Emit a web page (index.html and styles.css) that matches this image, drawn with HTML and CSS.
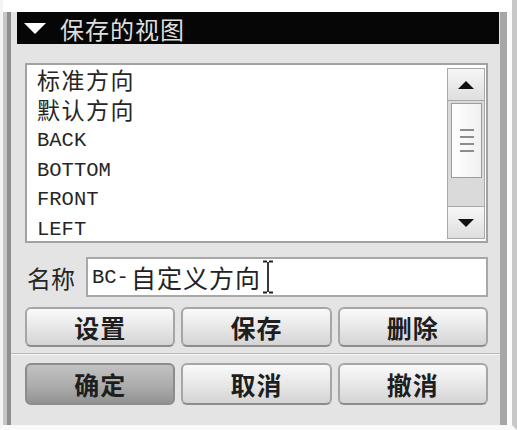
FILE: index.html
```html
<!DOCTYPE html>
<html lang="zh-CN">
<head>
    <meta charset="UTF-8">
    <title>保存的视图</title>
    <link rel="stylesheet" href="styles.css">
</head>
<body>
    <div class="shell">
        <div class="frame">
            <div class="panel">
                <div class="header">
                    <svg class="toggle" width="22" height="11" viewBox="0 0 22 11"><polygon points="0,0 22,0 11,11" fill="#fff"/></svg>
                    <span>保存的视图</span>
                </div>

                <div class="content">
                    <div class="listbox">
                        <div class="items">
                            <div class="item">标准方向</div>
                            <div class="item">默认方向</div>
                            <div class="item en">BACK</div>
                            <div class="item en">BOTTOM</div>
                            <div class="item en">FRONT</div>
                            <div class="item en">LEFT</div>
                        </div>
                        <div class="scrollbar">
                            <div class="sb-btn up">
                                <svg width="16" height="8" viewBox="0 0 16 8"><polygon points="8,0 16,8 0,8" fill="#111"/></svg>
                            </div>
                            <div class="thumb">
                                <span class="grip"></span>
                                <span class="grip"></span>
                                <span class="grip"></span>
                                <span class="grip"></span>
                            </div>
                            <div class="track"></div>
                            <div class="sb-btn down">
                                <svg width="16" height="8" viewBox="0 0 16 8"><polygon points="0,0 16,0 8,8" fill="#111"/></svg>
                            </div>
                        </div>
                    </div>

                    <div class="name-row">
                        <label>名称</label>
                        <div class="textbox">
                            <span class="en">BC-</span><span class="cjk">自定义方向</span>
                            <svg class="ibeam" width="12" height="34" viewBox="0 0 12 34"><path d="M1 1.5H5M7 1.5H11M6 2V32M1 32.5H5M7 32.5H11" stroke="#222" stroke-width="1.8" fill="none"/></svg>
                        </div>
                    </div>

                    <div class="btn-row">
                        <button class="btn">设置</button>
                        <button class="btn">保存</button>
                        <button class="btn">删除</button>
                    </div>
                </div>

                <div class="separator"></div>

                <div class="content">
                    <div class="btn-row last">
                        <button class="btn default">确定</button>
                        <button class="btn">取消</button>
                        <button class="btn">撤消</button>
                    </div>
                </div>
            </div>
        </div>
    </div>
</body>
</html>
```

FILE: styles.css
```css
body {
    margin: 0;
    background: #fff;
    font-family: "Noto Sans CJK SC", sans-serif;
    color: #262626;
}
.shell {
    width: 517px;
    height: 430px;
    box-sizing: border-box;
    border-left: 3px solid #f4f4f4;
    border-right: 5px solid #c8c8c8;
    border-bottom: 5px solid #fafafa;
    overflow: hidden;
}
.frame {
    height: 100%;
    box-sizing: border-box;
    border-left: 4px solid #c6c6c6;
    border-right: 5px solid #fafafa;
    border-bottom: 3px solid #c8c8c8;
}
.panel {
    height: 100%;
    box-sizing: border-box;
    border-left: 4px solid #8e8e8e;
    border-right: 7px solid #a6a6a6;
    border-bottom: 4px solid #8a8a8a;
    background: #e4e4e4;
}
.header {
    margin: 12px 1px 0 6px;
    height: 32px;
    background: #060606;
    display: flex;
    align-items: center;
    color: #dedede;
    font-size: 24px;
    letter-spacing: 1px;
}
.toggle {
    margin: 0 14px 0 7px;
}
.content {
    padding: 0 12px 0 14px;
}
.listbox {
    margin-top: 19px;
    height: 180px;
    box-sizing: border-box;
    border: 2px solid #a2a2a2;
    background: #fff;
    display: flex;
}
.items {
    flex: 1;
    padding: 2px 0 0 10px;
}
.item {
    height: 29.6px;
    line-height: 29.6px;
    font-family: "Liberation Sans", "Noto Sans CJK SC", sans-serif;
    font-size: 23px;
    letter-spacing: 1.5px;
    color: #262626;
}
.item.en, .en {
    font-family: "Liberation Mono", monospace;
    font-size: 20.5px;
    letter-spacing: 0;
}
.scrollbar {
    width: 38px;
    margin: 3px 1px 2px 0;
    box-sizing: border-box;
    border: 1px solid #a8a8a8;
    background: #dadada;
    display: flex;
    flex-direction: column;
}
.sb-btn {
    height: 31px;
    background: linear-gradient(#f7f7f7, #dedede);
    display: flex;
    align-items: center;
    justify-content: center;
}
.sb-btn.up {
    border-bottom: 1px solid #a8a8a8;
}
.sb-btn.down {
    border-top: 1px solid #a8a8a8;
}
.thumb {
    margin: 2px 2px 0 3px;
    height: 75px;
    box-sizing: border-box;
    border: 1px solid #9c9c9c;
    background: linear-gradient(90deg, #fff, #f0f0f0);
    display: flex;
    flex-direction: column;
    align-items: center;
    justify-content: center;
    gap: 5px;
}
.grip {
    width: 14px;
    height: 2px;
    background: #8c8c8c;
}
.track {
    flex: 1;
}
.name-row {
    margin-top: 14px;
    height: 40px;
    display: flex;
    align-items: center;
}
.name-row label {
    width: 59px;
    padding-left: 2px;
    font-size: 24px;
}
.textbox {
    flex: 1;
    height: 40px;
    box-sizing: border-box;
    border: 2px solid #a8a8a8;
    background: #fff;
    display: flex;
    align-items: center;
    padding-left: 4px;
    color: #222;
}
.textbox .cjk {
    font-size: 25px;
    letter-spacing: 1px;
    margin-left: 2px;
}
.ibeam {
    margin-left: 1px;
}
.btn-row {
    margin-top: 10px;
    display: flex;
    gap: 6px;
}
.btn-row.last {
    margin-top: 8px;
}
.btn {
    flex: 1;
    height: 40px;
    border: 2px solid #a6a6a6;
    border-bottom-color: #8c8c8c;
    border-radius: 6px;
    background: linear-gradient(#fafafa, #e6e6e6 55%, #d4d4d4);
    font-family: "Noto Sans CJK SC", sans-serif;
    font-size: 25px;
    font-weight: 700;
    letter-spacing: 1px;
    color: #1e1e1e;
    padding: 0;
}
.btn-row.last .btn {
    height: 42px;
}
.btn.default {
    background: linear-gradient(#c2c2c2, #acacac 55%, #929292);
    border-color: #8c8c8c;
}
.separator {
    margin-top: 6px;
    height: 1px;
    background: #b8b8b8;
    border-bottom: 1px solid #f8f8f8;
}
```
